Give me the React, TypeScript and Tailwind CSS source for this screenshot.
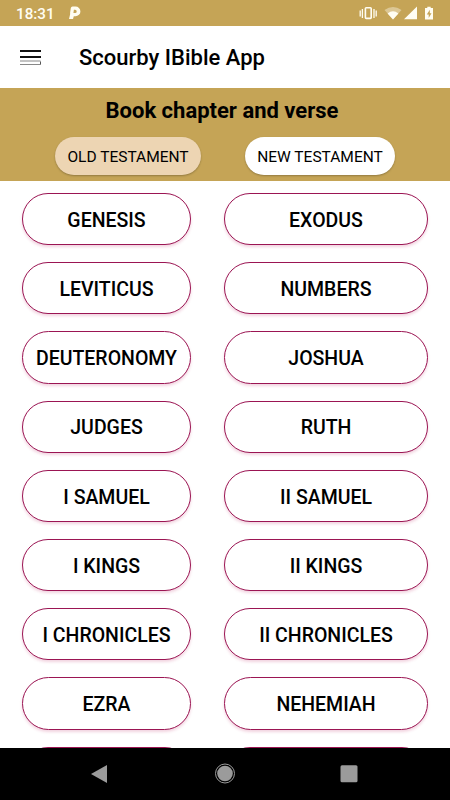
import React from 'react';

const BOOKS = [
  'GENESIS',
  'EXODUS',
  'LEVITICUS',
  'NUMBERS',
  'DEUTERONOMY',
  'JOSHUA',
  'JUDGES',
  'RUTH',
  'I SAMUEL',
  'II SAMUEL',
  'I KINGS',
  'II KINGS',
  'I CHRONICLES',
  'II CHRONICLES',
  'EZRA',
  'NEHEMIAH',
];

const StatusBar: React.FC = () => (
  <div className="flex h-[26px] shrink-0 items-center justify-between bg-[#c5a456] pl-4 pr-[15px] text-[#fffdf2]">
    <div className="flex items-center gap-[14px]">
      <span className="mt-[4px] text-[15.2px] leading-none font-medium">18:31</span>
      <svg className="mt-[1px] h-[14px] w-[12px]" viewBox="0 0 12 14">
        <path
          d="M3.5 0.5H6.5A4.9 4.9 0 0 1 6.5 10.3H4.8L4 13H0L1.3 7.5H1L1.8 2A1.8 1.8 0 0 1 3.5 0.5ZM4.9 3.8L4.4 7H6.1A1.6 1.6 0 0 0 6.1 3.8Z"
          fill="currentColor"
          fillRule="evenodd"
        />
      </svg>
    </div>
    <svg className="h-[16px] w-[76px]" viewBox="0 0 76 16" fill="currentColor">
      <path d="M1.2 5.5v6M3.4 4v9M15 4v9M17.2 5.5v6" stroke="currentColor" strokeWidth="1.3" />
      <rect x="6.4" y="2.8" width="5.8" height="10.6" rx="0.8" fill="none" stroke="currentColor" strokeWidth="1.6" />
      <path d="M25.5 5Q34 -1 42.5 5L34 14.5Z" opacity="0.4" />
      <path d="M28.6 8.4Q34 4 39.4 8.4L34 14.5Z" />
      <path d="M45 14.2L58 1.5V14.2Z" />
      <path d="M66 3H68.3V1.8H71.7V3H74V14.6H66ZM70.8 4.8L67.8 9.4H69.7V12.9L72.5 8.2H70.8Z" fillRule="evenodd" />
    </svg>
  </div>
);

const BookButton: React.FC<{ name?: string }> = ({ name }) => (
  <button className="h-[52.2px] rounded-full border-[1.3px] border-[#9b1553] bg-white pt-[3px] text-[19.5px] leading-none font-medium shadow-[0_2px_3px_rgba(190,40,100,0.2)]">
    {name}
  </button>
);

const NavBar: React.FC = () => (
  <div className="grid h-[52px] shrink-0 place-items-center bg-black">
    <svg className="h-[52px] w-[450px]" viewBox="0 0 450 52" fill="#9b9b9b">
      <path d="M91 26L107 17V35Z" />
      <circle cx="225" cy="25.5" r="7.8" />
      <circle cx="225" cy="25.5" r="9.5" fill="none" stroke="#9b9b9b" strokeWidth="1" />
      <rect x="340.5" y="17.3" width="17" height="17" rx="1.5" />
    </svg>
  </div>
);

export default function App() {
  return (
    <div className="flex h-[800px] w-[450px] flex-col overflow-hidden bg-white font-['Roboto',sans-serif] text-black">
      <StatusBar />

      <header className="flex h-[61.5px] shrink-0 items-center gap-[38px] pl-5">
        <svg className="mt-[1px] h-[17px] w-[21px]" viewBox="0 0 21 17" fill="none">
          <path d="M0 2h21M0 8h21" stroke="#111" strokeWidth="2" />
          <path d="M0 12h20.5M0 15.5h20.5" stroke="#888" strokeWidth="1.2" />
          <path d="M20.5 12.5v3" stroke="#555" strokeWidth="1" />
        </svg>
        <h1 className="mt-[3px] text-[22px] leading-none font-medium">Scourby IBible App</h1>
      </header>

      <section className="flex h-[93px] shrink-0 flex-col bg-[#c5a456]">
        <h2 className="mt-[11.5px] pr-[6px] text-center text-[22px] leading-[24px] font-bold">
          Book chapter and verse
        </h2>
        <div className="mt-[14px] flex gap-[44px] pl-[55px]">
          <button className="h-[38px] w-[146px] rounded-full bg-[#edd5b3] pt-[4px] text-[15.5px] leading-none shadow-[0_1px_2px_rgba(0,0,0,0.25)]">
            OLD TESTAMENT
          </button>
          <button className="h-[38px] w-[150px] rounded-full bg-white pt-[4px] text-[15.5px] leading-none shadow-[0_1px_2px_rgba(0,0,0,0.25)]">
            NEW TESTAMENT
          </button>
        </div>
      </section>

      <main className="min-h-0 flex-1 overflow-hidden pt-[12.5px]">
        <div className="grid grid-cols-[169px_204px] gap-x-[33px] gap-y-[17px] pl-[22px]">
          {BOOKS.map((name) => (
            <BookButton key={name} name={name} />
          ))}
          {/* next row peeks above the nav bar */}
          <BookButton />
          <BookButton />
        </div>
      </main>

      <NavBar />
    </div>
  );
}
